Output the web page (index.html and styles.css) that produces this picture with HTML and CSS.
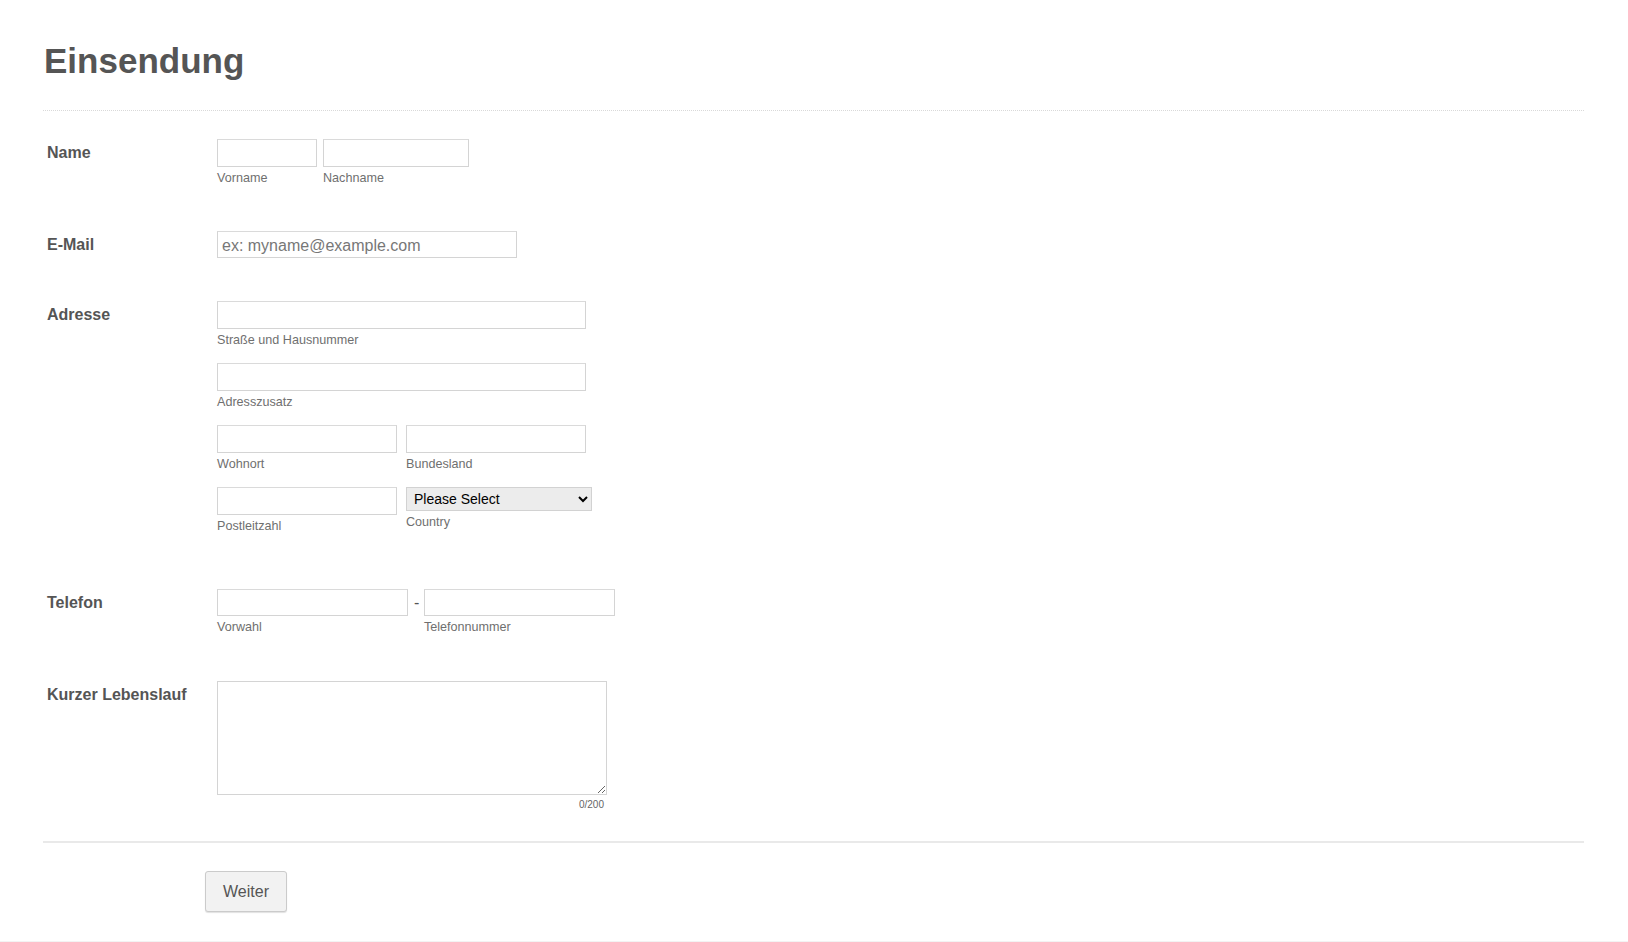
FILE: index.html
```html
<!DOCTYPE html>
<html lang="de">
<head>
<meta charset="utf-8">
<title>Einsendung</title>
<link rel="stylesheet" href="styles.css">
</head>
<body>
<div class="page-wrap">
  <form class="page">
    <header class="form-header">
      <h1 class="form-title">Einsendung</h1>
    </header>
    <ul class="form-list">
      <li class="row row-name">
        <label class="row-label">Name</label>
        <div class="row-input">
          <div class="inline">
            <span class="field">
              <input class="text w-first" type="text">
              <span class="sub">Vorname</span>
            </span>
            <span class="field">
              <input class="text w-last" type="text">
              <span class="sub">Nachname</span>
            </span>
          </div>
        </div>
      </li>

      <li class="row row-email">
        <label class="row-label">E-Mail</label>
        <div class="row-input">
          <input class="text w-email email" type="email" placeholder="ex: myname@example.com">
        </div>
      </li>

      <li class="row row-address">
        <label class="row-label">Adresse</label>
        <div class="row-input address">
          <span class="field">
            <input class="text w-full" type="text">
            <span class="sub">Straße und Hausnummer</span>
          </span>
          <span class="field">
            <input class="text w-full" type="text">
            <span class="sub">Adresszusatz</span>
          </span>
          <div class="inline pair">
            <span class="field">
              <input class="text w-half" type="text">
              <span class="sub">Wohnort</span>
            </span>
            <span class="field">
              <input class="text w-half" type="text">
              <span class="sub">Bundesland</span>
            </span>
          </div>
          <div class="inline pair">
            <span class="field">
              <input class="text w-half" type="text">
              <span class="sub">Postleitzahl</span>
            </span>
            <span class="field">
              <select class="country">
                <option>Please Select</option>
                <option>Deutschland</option>
                <option>Österreich</option>
                <option>Schweiz</option>
              </select>
              <span class="sub">Country</span>
            </span>
          </div>
        </div>
      </li>

      <li class="row row-phone">
        <label class="row-label">Telefon</label>
        <div class="row-input">
          <div class="inline">
            <span class="field">
              <input class="text w-phone" type="tel">
              <span class="sub">Vorwahl</span>
            </span>
            <span class="dash">-</span>
            <span class="field">
              <input class="text w-phone" type="tel">
              <span class="sub">Telefonnummer</span>
            </span>
          </div>
        </div>
      </li>

      <li class="row row-bio">
        <label class="row-label">Kurzer Lebenslauf</label>
        <div class="row-input">
          <div class="bio">
            <textarea class="textarea"></textarea>
            <span class="counter">0/200</span>
          </div>
        </div>
      </li>
    </ul>
    <div class="form-footer">
      <button type="button" class="btn-next">Weiter</button>
    </div>
  </form>
</div>
</body>
</html>
```

FILE: styles.css
```css
html, body {
  margin: 0;
  padding: 0;
  background: #ffffff;
}

body {
  font-family: "Liberation Sans", Arial, sans-serif;
  color: #555555;
}

.page-wrap {
  border-bottom: 1px solid #f3f3f3;
}

.page {
  display: block;
  padding: 0 44px 0 43px;
  margin: 0;
}

.form-header {
  padding: 41px 0 29px;
  border-bottom: 1px dotted #d9d9d9;
}

.form-title {
  margin: 0;
  font-size: 35px;
  line-height: 40px;
  font-weight: bold;
  color: #555555;
  padding-left: 1px;
}

.form-list {
  list-style: none;
  margin: 0;
  padding: 0;
}

.row {
  display: grid;
  grid-template-columns: 174px auto;
  align-items: start;
}

.row-name { margin-top: 28px; }
.row-email { margin-top: 45px; }
.row-address { margin-top: 43px; }
.row-phone { margin-top: 55px; }
.row-bio { margin-top: 46px; }

.row-label {
  padding: 4px 0 0 4px;
  font-size: 16px;
  line-height: 20px;
  font-weight: bold;
  color: #555555;
}

.row-input {
  display: flex;
  flex-direction: column;
  align-items: flex-start;
}

.inline {
  display: flex;
  align-items: flex-start;
  gap: 6px;
}

.pair {
  gap: 9px;
}

.address {
  gap: 15px;
}

.field {
  display: flex;
  flex-direction: column;
  align-items: flex-start;
}

.text {
  box-sizing: border-box;
  height: 28px;
  margin: 0;
  padding: 0 4px;
  border: 1px solid #d4d4d4;
  border-top-color: #dadada;
  border-radius: 0;
  background: #ffffff;
  font-family: "Liberation Sans", Arial, sans-serif;
  font-size: 16px;
  color: #555555;
  outline: none;
}

.email {
  height: 27px;
  padding-top: 3px;
}

.email::placeholder {
  color: #777777;
}

.w-first { width: 100px; }
.w-last { width: 146px; }
.w-email { width: 300px; }
.w-full { width: 369px; }
.w-half { width: 180px; }
.w-phone { width: 191px; height: 27px; }

.sub {
  margin-top: 4px;
  font-size: 12.6px;
  line-height: 15px;
  color: #6f6f6f;
  white-space: nowrap;
}

.country {
  box-sizing: border-box;
  width: 186px;
  height: 24px;
  margin: 0;
  padding: 0 0 0 3px;
  border: 1px solid #d2d2d2;
  border-radius: 0;
  background-color: #ececec;
  font-family: "Liberation Sans", Arial, sans-serif;
  font-size: 14px;
  color: #000000;
}

.dash {
  width: 4px;
  padding-top: 4px;
  font-size: 16px;
  line-height: 20px;
  color: #555555;
  text-align: center;
}

.bio {
  display: flex;
  flex-direction: column;
  width: 390px;
}

.textarea {
  box-sizing: border-box;
  width: 390px;
  height: 114px;
  margin: 0;
  padding: 4px;
  border: 1px solid #d4d4d4;
  border-radius: 0;
  background: #ffffff;
  font-family: "Liberation Sans", Arial, sans-serif;
  font-size: 14px;
  color: #555555;
  outline: none;
}

.counter {
  margin-top: 4px;
  padding-right: 3px;
  font-size: 10px;
  line-height: 12px;
  color: #666666;
  text-align: right;
}

.form-footer {
  margin-top: 30px;
  border-top: 2px solid #e9e9e9;
  padding: 28px 0 29px 162px;
}

.btn-next {
  box-sizing: border-box;
  width: 82px;
  height: 41px;
  margin: 0;
  padding: 0;
  border: 1px solid #cbcbcb;
  border-radius: 3px;
  background: #f2f2f2;
  box-shadow: 0 1px 1px rgba(0, 0, 0, 0.12);
  font-family: "Liberation Sans", Arial, sans-serif;
  font-size: 16px;
  color: #555555;
  cursor: pointer;
}
```
